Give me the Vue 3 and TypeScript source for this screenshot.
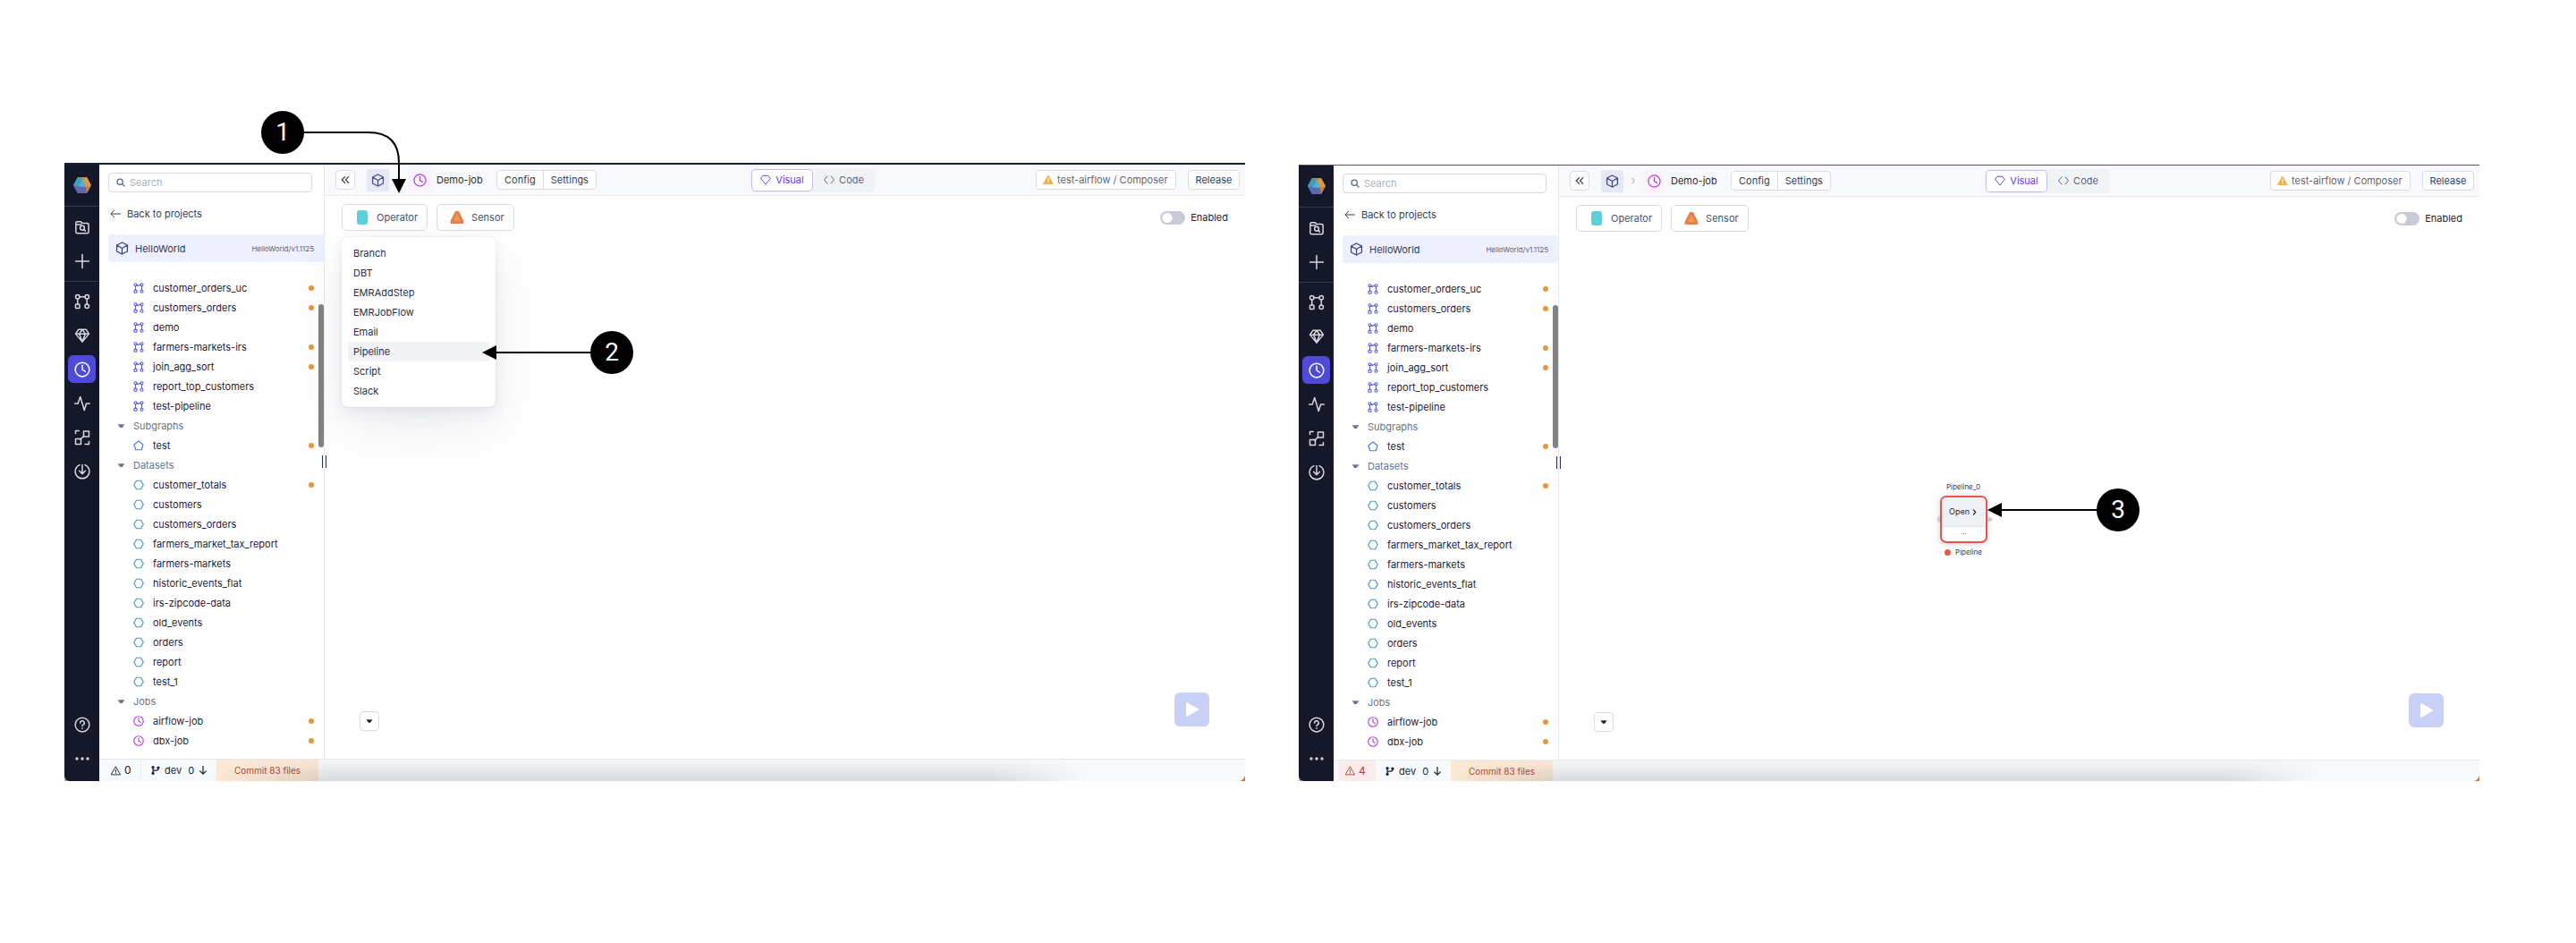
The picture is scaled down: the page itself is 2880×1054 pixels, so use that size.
<script setup lang="ts">
interface TreeRow {
  label: string
  icon?: string
  changed?: boolean
}

interface Panel {
  id: string
  warnings: number
  menuOpen: boolean
}

const panels: Panel[] = [
  { id: 'menu', warnings: 0, menuOpen: true },
  { id: 'node', warnings: 4, menuOpen: false },
]

const row = (icon: string, label: string, changed = false): TreeRow => ({ icon, label, changed })

const tree: TreeRow[] = [
  row('pipeline', 'customer_orders_uc', true),
  row('pipeline', 'customers_orders', true),
  row('pipeline', 'demo'),
  row('pipeline', 'farmers-markets-irs', true),
  row('pipeline', 'join_agg_sort', true),
  row('pipeline', 'report_top_customers'),
  row('pipeline', 'test-pipeline'),
  { label: 'Subgraphs' },
  row('pentagon', 'test', true),
  { label: 'Datasets' },
  row('hexagon', 'customer_totals', true),
  row('hexagon', 'customers'),
  row('hexagon', 'customers_orders'),
  row('hexagon', 'farmers_market_tax_report'),
  row('hexagon', 'farmers-markets'),
  row('hexagon', 'historic_events_flat'),
  row('hexagon', 'irs-zipcode-data'),
  row('hexagon', 'old_events'),
  row('hexagon', 'orders'),
  row('hexagon', 'report'),
  row('hexagon', 'test_1'),
  { label: 'Jobs' },
  row('clock', 'airflow-job', true),
  row('clock', 'dbx-job', true),
]

const railTop = [
  { icon: 'folder', name: 'Browse' },
  { icon: 'plus', name: 'Create' },
]
const railMain = [
  { icon: 'pipeline', name: 'Pipelines' },
  { icon: 'gem', name: 'Gems' },
  { icon: 'clock', name: 'Jobs' },
  { icon: 'activity', name: 'Monitoring' },
  { icon: 'lineage', name: 'Lineage' },
  { icon: 'download', name: 'Downloads' },
]
const railBottom = [
  { icon: 'help', name: 'Help' },
  { icon: 'more', name: 'More' },
]

const operators = ['Branch', 'DBT', 'EMRAddStep', 'EMRJobFlow', 'Email', 'Pipeline', 'Script', 'Slack']
</script>

<template>
  <svg class="sprite" width="0" height="0" aria-hidden="true">
    <symbol id="i-folder" viewBox="0 0 24 24">
      <path d="M2.500 8V5.500a2 2 0 0 1 2-2h5l2.500 2.500h7.500a2 2 0 0 1 2 2V19a2 2 0 0 1-2 2h-15a2 2 0 0 1-2-2V8h8" />
      <circle cx="12" cy="13" r="3.200" /><path d="M14.500 15.500l2 2" />
    </symbol>
    <symbol id="i-plus" viewBox="0 0 24 24"><path d="M12 2v20M2 12h20" /></symbol>
    <symbol id="i-pipeline" viewBox="0 0 24 24">
      <circle cx="5" cy="5" r="3" /><circle cx="19" cy="5" r="3" /><circle cx="19" cy="19" r="3" />
      <rect x="2" y="16" width="6" height="6" rx="1" /><path d="M5 8v8M19 8v8M8 5h8" />
    </symbol>
    <symbol id="i-flow" viewBox="0 0 24 24">
      <circle cx="5" cy="4.500" r="3" /><circle cx="19" cy="4.500" r="3" /><circle cx="19" cy="19.500" r="3" />
      <rect x="2" y="16.500" width="6" height="6" rx="1" /><path d="M5 7.500v9M19 7.500v9M8 5q1 3 4 1t4-1" />
    </symbol>
    <symbol id="i-gem" viewBox="0 0 24 24">
      <path d="M6.500 3h11L22 9.500 12 21.500 2 9.500zM2 9.500h20M12 3L7.500 9.500l4.500 12 4.500-12z" />
    </symbol>
    <symbol id="i-clock" viewBox="0 0 24 24"><circle cx="12" cy="12" r="10.500" /><path d="M12 5.500V12l4.500 3" /></symbol>
    <symbol id="i-activity" viewBox="0 0 24 24"><path d="M1 12h4.500L9 2l6 20 3-10h5" /></symbol>
    <symbol id="i-lineage" viewBox="0 0 24 24">
      <path d="M2 6V2h5M22 18v4h-6M9 15l5-5" />
      <rect x="14" y="2.500" width="8" height="8" /><rect x="2" y="14" width="8" height="8" />
    </symbol>
    <symbol id="i-download" viewBox="0 0 24 24">
      <path d="M8 2.200a10.500 10.500 0 1 0 8 0M12 2v13M7.500 11l4.500 4.500 4.500-4.500" />
    </symbol>
    <symbol id="i-help" viewBox="0 0 24 24">
      <circle cx="12" cy="12" r="10.500" /><path d="M9 9.500a3 3 0 1 1 4.200 2.600c-.8.400-1.200.9-1.200 1.900M12 17v.6" />
    </symbol>
    <symbol id="i-more" viewBox="0 0 24 24">
      <g fill="currentColor" stroke="none"><circle cx="4" cy="12" r="2.200" /><circle cx="12" cy="12" r="2.200" /><circle cx="20" cy="12" r="2.200" /></g>
    </symbol>
    <symbol id="i-pentagon" viewBox="0 0 24 24"><path d="M12 2l10 8-3.500 11.500h-13L2 10z" /></symbol>
    <symbol id="i-hexagon" viewBox="0 0 24 24"><path d="M7 2.500h10L22.500 12 17 21.500H7L1.500 12z" /></symbol>
    <symbol id="i-cube" viewBox="0 0 24 24"><path d="M12 1.500l9.500 5v11L12 22.500l-9.500-5v-11zM2.500 6.500L12 12l9.500-5.500M12 12v10.500" /></symbol>
    <symbol id="i-search" viewBox="0 0 24 24"><circle cx="10" cy="10" r="7.500" /><path d="M15.500 15.500L22 22" /></symbol>
    <symbol id="i-back" viewBox="0 0 24 24"><path d="M23 12H2M9.500 4L2 12l7.500 8" /></symbol>
    <symbol id="i-down" viewBox="0 0 24 24"><path d="M12 1v21M4 14l8 8 8-8" /></symbol>
    <symbol id="i-collapse" viewBox="0 0 24 24"><path d="M11 4l-8 8 8 8M21 4l-8 8 8 8" /></symbol>
    <symbol id="i-chevron" viewBox="0 0 24 24"><path d="M8 3l8 9-8 9" /></symbol>
    <symbol id="i-diamond" viewBox="0 0 24 24"><path d="M7 2.500h10L22.500 9 12 22 1.500 9z" /></symbol>
    <symbol id="i-code" viewBox="0 0 24 24"><path d="M8 4l-7 8 7 8M16 4l7 8-7 8" /></symbol>
    <symbol id="i-warning" viewBox="0 0 24 24"><path d="M12 2.500L23 21.500H1zM12 9v6M12 17.500v1" /></symbol>
    <symbol id="i-alert" viewBox="0 0 24 24">
      <path d="M12 3L22.500 21h-21z" fill="#f2b04a" stroke="#f2b04a" /><path d="M12 9v6M12 17.500v1" stroke="#fff" />
    </symbol>
    <symbol id="i-branch" viewBox="0 0 24 24">
      <g fill="currentColor"><circle cx="5" cy="4" r="2.500" /><circle cx="5" cy="20" r="2.500" /><circle cx="19" cy="5" r="2.500" /></g>
      <path d="M5 4v16M19 5v3q0 4-5 4H9q-4 0-4 4" />
    </symbol>
    <symbol id="i-caret" viewBox="0 0 24 24"><path d="M1.500 7h21L15 17H9z" fill="currentColor" stroke="none" /></symbol>
    <symbol id="i-logo" viewBox="0 0 20 18">
      <g stroke="none">
        <path d="M5 0h10L20 9 15 18H5L0 9z" fill="#4aa8bf" />
        <path d="M5 0L0 9l6 1.500L10.500 2z" fill="#3f9fb8" />
        <path d="M5 0h10L10.500 2z" fill="#d2793a" /><path d="M15 0l-4.500 2L14 11l6-2z" fill="#e8963c" />
        <path d="M10.500 2L6 10.500l8 .5z" fill="#4fb5d8" />
        <path d="M20 9l-6 2-.5 4L15 18z" fill="#d97838" />
        <path d="M0 9l6 1.500L14 11l1 7H5z" fill="#6168b0" />
      </g>
    </symbol>
  </svg>

  <main class="page">
    <section v-for="p in panels" :key="p.id" class="frame" :class="`frame-${p.id}`">
      <div class="strip"></div>
      <div class="window">
        <nav class="rail" aria-label="Workspace">
          <div class="rail-logo"><svg class="logo"><use href="#i-logo" /></svg></div>
          <div class="rail-group">
            <button v-for="r in railTop" :key="r.icon" class="rail-btn" :aria-label="r.name">
              <svg class="ic ic-rail"><use :href="`#i-${r.icon}`" /></svg>
            </button>
          </div>
          <div class="rail-group rail-main">
            <button v-for="r in railMain" :key="r.icon" class="rail-btn" :class="{ active: r.icon === 'clock' }" :aria-label="r.name">
              <svg class="ic ic-rail"><use :href="`#i-${r.icon}`" /></svg>
            </button>
          </div>
          <div class="rail-bottom">
            <button v-for="r in railBottom" :key="r.icon" class="rail-btn" :aria-label="r.name">
              <svg class="ic ic-rail"><use :href="`#i-${r.icon}`" /></svg>
            </button>
          </div>
        </nav>

        <div class="content">
          <div class="body">
            <aside class="sidebar">
              <label class="search">
                <svg class="ic ic-sm"><use href="#i-search" /></svg>
                <input type="text" placeholder="Search" aria-label="Search" />
              </label>
              <a class="back" href="#"><svg class="ic ic-md"><use href="#i-back" /></svg>Back to projects</a>
              <div class="project">
                <svg class="ic ic-lg"><use href="#i-cube" /></svg>
                <span class="project-name">HelloWorld</span>
                <span class="version">HelloWorld/v1.1125</span>
              </div>
              <ul class="tree">
                <li v-for="(t, i) in tree" :key="i" :class="t.icon ? 'leaf' : 'group'">
                  <svg v-if="t.icon" class="ic ic-tree" :class="`c-${t.icon}`">
                    <use :href="t.icon === 'pipeline' ? '#i-flow' : `#i-${t.icon}`" />
                  </svg>
                  <svg v-else class="ic ic-fold"><use href="#i-caret" /></svg>
                  <span>{{ t.label }}</span>
                  <i v-if="t.changed" class="dot"></i>
                </li>
              </ul>
              <div class="scrollbar"></div>
              <div class="grip"></div>
            </aside>

            <div class="main">
              <header class="toolbar">
                <button class="btn square" aria-label="Collapse"><svg class="ic ic-sm"><use href="#i-collapse" /></svg></button>
                <span class="tile tile-project"><svg class="ic ic-lg"><use href="#i-cube" /></svg></span>
                <span class="crumb"><svg class="ic ic-xs"><use href="#i-chevron" /></svg></span>
                <span class="tile tile-job"><svg class="ic ic-lg"><use href="#i-clock" /></svg></span>
                <span class="job-name">Demo-job</span>
                <div class="pair">
                  <button>Config</button><button>Settings</button>
                </div>
                <div class="view">
                  <button class="on"><svg class="ic ic-md"><use href="#i-diamond" /></svg>Visual</button>
                  <button><svg class="ic ic-md"><use href="#i-code" /></svg>Code</button>
                </div>
                <button class="btn fabric"><svg class="ic ic-md"><use href="#i-alert" /></svg>test-airflow / Composer</button>
                <button class="btn release">Release</button>
              </header>

              <div class="canvas">
                <div class="palette">
                  <button class="btn tool">
                    <svg width="16" height="16" viewBox="0 0 16 16"><rect x="2" width="12" height="16" rx="3" fill="#5fcfdb" /></svg>Operator
                  </button>
                  <button class="btn tool">
                    <svg width="16" height="16" viewBox="0 0 16 16">
                      <path d="M7 2.500h2L14 12.500v1H2v-1z" fill="#e99a55" stroke="#e6804f" stroke-width="3" stroke-linejoin="round" />
                    </svg>Sensor
                  </button>
                  <label class="enabled"><input type="checkbox" role="switch" />Enabled</label>
                </div>
                <div class="corner">
                  <button class="btn square" aria-label="Expand"><svg class="ic ic-caret"><use href="#i-caret" /></svg></button>
                  <button class="play" aria-label="Run">
                    <svg width="16" height="18" viewBox="0 0 16 18"><path d="M2 2v14l12-7z" fill="#fff" stroke="#fff" stroke-width="2" stroke-linejoin="round" /></svg>
                  </button>
                </div>
              </div>
            </div>
          </div>

          <footer class="status">
            <span class="warn" :class="{ bad: p.warnings > 0 }"><svg class="ic ic-warn"><use href="#i-warning" /></svg>{{ p.warnings }}</span>
            <span class="git">
              <svg class="ic ic-sm"><use href="#i-branch" /></svg><span>dev</span>
              <span class="behind">0</span><svg class="ic ic-sm"><use href="#i-down" /></svg>
            </span>
            <button class="commit">Commit 83 files</button>
          </footer>
        </div>
      </div>

      <template v-if="p.menuOpen">
        <ul class="menu">
          <li v-for="o in operators" :key="o"><button :class="{ hover: o === 'Pipeline' }">{{ o }}</button></li>
        </ul>
        <svg class="arrow arrow-1" width="130" height="72" viewBox="0 0 130 72">
          <path d="M0 4h72q34 0 34 34v18" fill="none" stroke="#000" stroke-width="2" /><path d="M98 56h16l-8 16z" />
        </svg>
        <span class="badge badge-1">1</span>
        <svg class="arrow arrow-2" width="122" height="16" viewBox="0 0 122 16">
          <path d="M10 8h112" stroke="#000" stroke-width="2" /><path d="M16 0v16L0 8z" />
        </svg>
        <span class="badge badge-2">2</span>
      </template>
      <template v-else>
        <div class="node">
          <span class="node-title">Pipeline_0</span>
          <div class="node-box">
            <button class="node-open">Open<svg class="ic ic-node"><use href="#i-chevron" /></svg></button>
            <span class="node-more"><i></i><i></i><i></i></span>
            <span class="port-in"></span>
            <span class="port-out"></span>
          </div>
          <span class="node-kind"><i></i>Pipeline</span>
        </div>
        <svg class="arrow arrow-3" width="122" height="16" viewBox="0 0 122 16">
          <path d="M10 8h112" stroke="#000" stroke-width="2" /><path d="M16 0v16L0 8z" />
        </svg>
        <span class="badge badge-3">3</span>
      </template>
    </section>
  </main>
</template>

<style>
body {
  background: #fff;
}
</style>

<style scoped>
* {
  box-sizing: border-box;
}
.sprite {
  position: absolute;
}
.page {
  display: flex;
  gap: 60px;
  padding: 182px 108px 180px 72px;
  font-family: Inter, "Liberation Sans", sans-serif;
  font-size: 11px;
  line-height: 16px;
  color: #1f2335;
}
button {
  font: inherit;
  color: inherit;
  border: 0;
  padding: 0;
  background: none;
  display: flex;
  align-items: center;
  justify-content: center;
}
ul {
  list-style: none;
  margin: 0;
  padding: 0;
}
.ic {
  fill: none;
  stroke: currentColor;
  stroke-width: 2;
  stroke-linecap: round;
  stroke-linejoin: round;
  width: 12px;
  height: 12px;
  flex: none;
}
.ic-tree { stroke-width: 2.4; }
.ic-xs { width: 8px; height: 8px; stroke-width: 3; }
.ic-sm { width: 10px; height: 10px; stroke-width: 3; }
.ic-warn { width: 11px; height: 11px; }
.ic-lg { width: 15px; height: 15px; }
.ic-rail { width: 18px; height: 18px; }
.ic-caret { width: 8px; height: 8px; }
.ic-fold { width: 9px; height: 10px; }

/* window shell */
.frame {
  flex: 1;
  min-width: 0;
  position: relative;
  display: flex;
  flex-direction: column;
}
.frame-node {
  margin-top: 2px;
}
.strip {
  height: 2px;
  background: #1b2133;
}
.frame-node .strip {
  height: 1px;
  background: #5f5158;
}
.window {
  flex: 1;
  display: flex;
  background: linear-gradient(90deg, #a9abb4 0, #a9abb4 50%, #c9773a 98%);
}

/* icon rail */
.rail {
  width: 39px;
  flex: none;
  background: #141829;
  border-radius: 0 0 0 6px;
  color: #d4d7df;
  display: flex;
  flex-direction: column;
  align-items: center;
  padding-bottom: 9px;
}
.rail-logo {
  height: 46px;
  display: flex;
  align-items: center;
}
.logo {
  width: 20px;
  height: 18px;
}
.rail-group {
  width: 100%;
  display: flex;
  flex-direction: column;
  align-items: center;
  gap: 6px;
  padding: 7px 0 6px;
  border-top: 1px solid #343a49;
}
.rail-main {
  gap: 7px;
  padding: 6px 0;
}
.rail-btn {
  width: 31px;
  height: 32px;
  border-radius: 6px;
}
.rail-main .rail-btn {
  height: 31px;
}
.rail-btn.active {
  background: #4f4bd8;
  color: #fff;
}
.rail-bottom {
  margin-top: auto;
  display: flex;
  flex-direction: column;
  gap: 6px;
}

.content {
  flex: 1;
  min-width: 0;
  display: flex;
  flex-direction: column;
  background: #fff;
  border-radius: 0 0 8px 0;
  overflow: hidden;
}
.body {
  display: flex;
}

/* sidebar */
.sidebar {
  width: 252px;
  flex: none;
  position: relative;
  border-right: 1px solid #e5e7ee;
  padding: 9px 0 9px 10px;
}
.search {
  display: flex;
  align-items: center;
  gap: 5px;
  width: 228px;
  height: 22px;
  padding: 0 8px;
  border: 1px solid #d6d9e0;
  border-radius: 4px;
  color: #5d6579;
}
.search input {
  flex: 1;
  min-width: 0;
  border: 0;
  padding: 0;
  outline: 0;
  font: inherit;
  background: none;
}
.search input::placeholder {
  color: #adb2be;
}
.back {
  display: flex;
  align-items: center;
  gap: 7px;
  margin: 16px 0 15px 2px;
  color: #374056;
  text-decoration: none;
}
.project {
  display: flex;
  align-items: center;
  gap: 7px;
  height: 31px;
  padding: 0 11px 0 8px;
  border-radius: 3px;
  background: #eff0fe;
  color: #3c4478;
}
.project-name {
  color: #333b50;
}
.version {
  margin-left: auto;
  font-size: 8px;
  color: #5b6377;
}
.tree {
  margin-top: 18px;
}
.tree li {
  display: flex;
  align-items: center;
  height: 22px;
  padding-right: 11px;
}
.leaf {
  gap: 10px;
  padding-left: 28px;
}
.group {
  gap: 9px;
  padding-left: 10px;
  color: #6b7488;
}
.c-pipeline { color: #5d5fdc; }
.c-pentagon { color: #4a7bf0; }
.c-hexagon { color: #4a9bbd; }
.c-clock { color: #b44be0; }
.dot {
  margin-left: auto;
  width: 6px;
  height: 6px;
  border-radius: 50%;
  background: #e8963a;
}
.scrollbar {
  position: absolute;
  right: 0;
  top: 156px;
  width: 6px;
  height: 160px;
  border-radius: 3px;
  background: #828282;
}
.grip {
  position: absolute;
  right: -3px;
  top: 325px;
  width: 5px;
  height: 14px;
  border: solid #2a2f42;
  border-width: 0 1px;
  background: #eceef3;
}

/* toolbar */
.main {
  flex: 1;
  min-width: 0;
  display: flex;
  flex-direction: column;
}
.toolbar {
  display: flex;
  align-items: center;
  height: 35px;
  padding: 0 6px 0 12px;
  background: #f8f9fc;
  border-bottom: 1px solid #e8eaf0;
  color: #374056;
}
.btn {
  border: 1px solid #d9dce3;
  border-radius: 4px;
  background: #fff;
  height: 22px;
}
.square {
  width: 22px;
}
.tile {
  display: flex;
  align-items: center;
  justify-content: center;
  width: 25px;
  height: 25px;
  border-radius: 3px;
}
.tile-project {
  margin-left: 13px;
  background: #e6e9f3;
  color: #434a86;
}
.tile-job {
  background: #faf3fd;
  color: #b23cd8;
}
.crumb {
  width: 22px;
  display: flex;
  justify-content: center;
  color: #9aa1b0;
}
.job-name {
  margin-left: 6px;
  width: 67px;
  color: #262c3d;
  white-space: nowrap;
}
.pair {
  display: flex;
  width: 112px;
  height: 22px;
  border: 1px solid #d9dce3;
  border-radius: 4px;
  background: #fff;
}
.pair button {
  flex: auto;
}
.pair button + button {
  border-left: 1px solid #d9dce3;
}
.view {
  display: flex;
  margin-left: 172px;
  width: 140px;
  height: 27px;
  padding: 1px;
  border-radius: 5px;
  background: #f2f3f7;
  color: #5d6579;
}
.view button {
  width: 69px;
  gap: 5px;
}
.view .on {
  border: 1px solid #c6bdf7;
  border-radius: 5px;
  background: #fff;
  color: #6440dd;
}
.fabric {
  margin-left: auto;
  width: 157px;
  padding: 0 7px;
  gap: 4px;
  justify-content: flex-start;
  color: #5d6579;
  white-space: nowrap;
}
.release {
  margin-left: 13px;
  width: 58px;
}

/* canvas */
.canvas {
  flex: 1;
  display: flex;
  flex-direction: column;
  justify-content: space-between;
}
.palette {
  display: flex;
  align-items: center;
  gap: 10px;
  padding: 9px 19px;
}
.tool {
  height: 30px;
  padding: 0 10px 0 14px;
  gap: 8px;
  border-radius: 5px;
  color: #4a5368;
}
.enabled {
  margin-left: auto;
  display: flex;
  align-items: center;
  gap: 6px;
}
.enabled input {
  appearance: none;
  margin: 0;
  width: 28px;
  height: 15px;
  border-radius: 8px;
  background: radial-gradient(circle at 8px 50%, #fff 5px, #c9cad8 6px);
}
.corner {
  display: flex;
  align-items: flex-end;
  justify-content: space-between;
  padding: 0 40px 31px 39px;
}
.play {
  width: 39px;
  height: 38px;
  margin-bottom: 5px;
  border-radius: 6px;
  background: #c9d0f7;
}

/* status bar */
.status {
  position: relative;
  flex: 1;
  min-height: 24px;
  display: flex;
  align-items: stretch;
  padding-left: 6px;
  border-top: 1px solid #e5e7ee;
  background: #f8f9fb;
}
.frame-menu .status {
  min-height: 25px;
}
.status::after {
  content: "";
  position: absolute;
  inset: 0;
  pointer-events: none;
  background: linear-gradient(to top, rgba(20, 20, 20, 0.13), rgba(20, 20, 20, 0.01));
  mask-image: linear-gradient(100deg, transparent 10%, #000 20%, #000 78%, transparent 86%);
}
.warn {
  display: flex;
  align-items: center;
  gap: 4px;
  width: 41px;
  padding-left: 7px;
  border-right: 1px solid #e8eaf0;
  font-size: 12px;
}
.warn.bad {
  background: #fbecec;
  color: #c13b34;
}
.git {
  display: flex;
  align-items: center;
  gap: 5px;
  width: 84px;
  padding-left: 11px;
}
.behind {
  margin-left: 2px;
}
.commit {
  width: 114px;
  background: #fce9d6;
  font-size: 10px;
  color: #b8492c;
}

/* operator menu */
.menu {
  position: absolute;
  left: 310px;
  top: 83px;
  width: 172px;
  padding: 7px;
  border-radius: 7px;
  background: #fff;
  box-shadow: 0 0 2px rgba(60, 64, 110, 0.16), 0 6px 14px rgba(60, 64, 110, 0.08), 0 22px 60px rgba(60, 64, 110, 0.1);
}
.menu button {
  width: 100%;
  height: 22px;
  padding-left: 6px;
  border-radius: 2px;
  justify-content: flex-start;
  color: #2b3042;
}
.menu .hover {
  background: #f2f3f7;
}

/* pipeline node */
.node {
  position: absolute;
  left: 703px;
  top: 352px;
  width: 80px;
  display: flex;
  flex-direction: column;
  align-items: center;
  font-size: 8px;
  color: #3a4052;
}
.node-box {
  position: relative;
  width: 53px;
  height: 53px;
  margin: 2px 0;
  border: 2px solid #e0584a;
  border-radius: 7px;
  background: #fff;
  box-shadow: 0 1px 6px rgba(60, 64, 110, 0.25);
}
.node-open {
  width: 100%;
  height: 33px;
  gap: 2px;
  border-radius: 5px 5px 0 0;
  border-bottom: 1px solid #dfe3ea;
  background: #edf1f5;
  font-size: 9px;
  color: #1f2335;
}
.ic-node {
  width: 7px;
  height: 7px;
  stroke-width: 4;
}
.node-more {
  display: flex;
  justify-content: center;
  gap: 1px;
  padding-top: 7px;
}
.node-more i {
  width: 1px;
  height: 1px;
  background: #8b90a5;
}
.port-in,
.port-out {
  position: absolute;
  top: 21px;
  height: 7px;
}
.port-in {
  left: -5px;
  width: 3px;
  border-radius: 3px 0 0 3px;
  background: #c9cad8;
}
.port-out {
  right: -8px;
  border: solid transparent;
  border-width: 3px 0 3px 6px;
  border-left-color: #c9cad8;
}
.node-kind {
  display: flex;
  align-items: center;
  gap: 5px;
}
.node-kind i {
  width: 7px;
  height: 7px;
  border-radius: 50%;
  background: #e0584a;
}

/* callouts */
.badge {
  position: absolute;
  width: 48px;
  height: 48px;
  border-radius: 50%;
  background: #000;
  color: #fff;
  font-family: Roboto, "Liberation Sans", sans-serif;
  font-size: 28px;
  line-height: 48px;
  text-align: center;
}
.arrow {
  position: absolute;
}
.badge-1 { left: 220px; top: -58px; }
.arrow-1 { left: 268px; top: -38px; }
.badge-2 { left: 588px; top: 188px; }
.arrow-2 { left: 467px; top: 204px; }
.badge-3 { left: 892px; top: 362px; }
.arrow-3 { left: 770px; top: 378px; }
</style>
